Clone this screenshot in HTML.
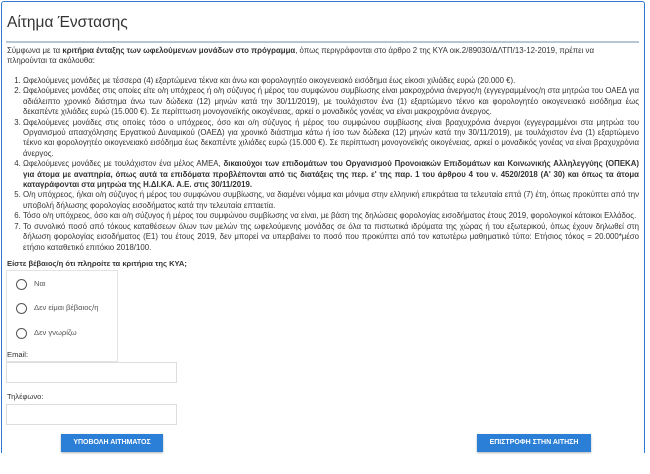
<!DOCTYPE html>
<html><head><meta charset="utf-8"><style>
body{margin:0;width:650px;height:474px;background:#fff;font-family:"Liberation Sans",sans-serif;color:#333;overflow:hidden}
.box{position:absolute;left:1px;top:1px;width:642px;height:451px;border:1.5px solid #2f78d0;border-bottom:none;border-radius:3px 3px 0 0}
h1{position:absolute;left:7px;top:14px;margin:0;font-size:15.5px;font-weight:normal;color:#333}
.hr{position:absolute;left:6px;top:41px;width:633px;height:2px;background:#b7c6d5}
.txt{position:absolute;left:7px;width:632px;font-size:7.85px;line-height:10.4px}
ol{margin:0;padding-left:16px}
li{text-align:justify}
.q{position:absolute;left:7px;top:259px;font-size:7.6px;font-weight:bold;color:#333}
.rb{position:absolute;left:6px;top:270px;width:110px;height:90px;border:1px solid #e3e3e3}
.r{position:absolute;left:16px;font-size:7.6px;color:#555;line-height:11px}
.r i{display:inline-block;width:9px;height:9px;border:1px solid #555;border-radius:50%;vertical-align:middle;margin-right:7px}
.lbl{position:absolute;left:7px;font-size:7.6px;color:#333}
.in{position:absolute;left:6px;width:169px;height:19px;border:1px solid #ddd}
.btn{position:absolute;top:434px;height:18px;background:#2b7fd6;color:#fff;font-size:7px;font-weight:bold;text-align:center;line-height:18px;box-shadow:0 1px 2px rgba(0,0,0,.3)}
</style></head><body>
<div class="box"></div>
<h1>Αίτημα Ένστασης</h1>
<div class="hr"></div>
<div class="txt" style="top:46px;width:600px">Σύμφωνα με τα <b>κριτήρια ένταξης των ωφελούμενων μονάδων στο πρόγραμμα</b>, όπως περιγράφονται στο άρθρο 2 της ΚΥΑ οικ.2/89030/ΔΛΤΠ/13-12-2019, πρέπει να πληρούνται τα ακόλουθα:</div>
<div class="txt" style="top:76px"><ol>
<li>Ωφελούμενες μονάδες με τέσσερα (4) εξαρτώμενα τέκνα και άνω και φορολογητέο οικογενειακό εισόδημα έως είκοσι χιλιάδες ευρώ (20.000 €).</li>
<li>Ωφελούμενες μονάδες στις οποίες είτε ο/η υπόχρεος ή ο/η σύζυγος ή μέρος του συμφώνου συμβίωσης είναι μακροχρόνια άνεργος/η (εγγεγραμμένος/η στα μητρώα του ΟΑΕΔ για αδιάλειπτο χρονικό διάστημα άνω των δώδεκα (12) μηνών κατά την 30/11/2019), με τουλάχιστον ένα (1) εξαρτώμενο τέκνο και φορολογητέο οικογενειακό εισόδημα έως δεκαπέντε χιλιάδες ευρώ (15.000 €). Σε περίπτωση μονογονεϊκής οικογένειας, αρκεί ο μοναδικός γονέας να είναι μακροχρόνια άνεργος.</li>
<li>Ωφελούμενες μονάδες στις οποίες τόσο ο υπόχρεος, όσο και ο/η σύζυγος ή μέρος του συμφώνου συμβίωσης είναι βραχυχρόνια άνεργοι (εγγεγραμμένοι στα μητρώα του Οργανισμού απασχόλησης Εργατικού Δυναμικού (ΟΑΕΔ) για χρονικό διάστημα κάτω ή ίσο των δώδεκα (12) μηνών κατά την 30/11/2019), με τουλάχιστον ένα (1) εξαρτώμενο τέκνο και φορολογητέο οικογενειακό εισόδημα έως δεκαπέντε χιλιάδες ευρώ (15.000 €). Σε περίπτωση μονογονεϊκής οικογένειας, αρκεί ο μοναδικός γονέας να είναι βραχυχρόνια άνεργος.</li>
<li>Ωφελούμενες μονάδες με τουλάχιστον ένα μέλος ΑΜΕΑ, <b>δικαιούχοι των επιδομάτων του Οργανισμού Προνοιακών Επιδομάτων και Κοινωνικής Αλληλεγγύης (ΟΠΕΚΑ) για άτομα με αναπηρία, όπως αυτά τα επιδόματα προβλέπονται από τις διατάξεις της περ. ε' της παρ. 1 του άρθρου 4 του ν. 4520/2018 (Α' 30) και όπως τα άτομα καταγράφονται στα μητρώα της Η.ΔΙ.ΚΑ. Α.Ε. στις 30/11/2019.</b></li>
<li>Ο/η υπόχρεος, ή/και ο/η σύζυγος ή μέρος του συμφώνου συμβίωσης, να διαμένει νόμιμα και μόνιμα στην ελληνική επικράτεια τα τελευταία επτά (7) έτη, όπως προκύπτει από την υποβολή δήλωσης φορολογίας εισοδήματος κατά την τελευταία επταετία.</li>
<li>Τόσο ο/η υπόχρεος, όσο και ο/η σύζυγος ή μέρος του συμφώνου συμβίωσης να είναι, με βάση της δηλώσεις φορολογίας εισοδήματος έτους 2019, φορολογικοί κάτοικοι Ελλάδος.</li>
<li>Το συνολικό ποσό από τόκους καταθέσεων όλων των μελών της ωφελούμενης μονάδας σε όλα τα πιστωτικά ιδρύματα της χώρας ή του εξωτερικού, όπως έχουν δηλωθεί στη δήλωση φορολογίας εισοδήματος (Ε1) του έτους 2019, δεν μπορεί να υπερβαίνει το ποσό που προκύπτει από τον κατωτέρω μαθηματικό τύπο: Ετήσιος τόκος = 20.000*μέσο ετήσιο καταθετικό επιτόκιο 2018/100.</li>
</ol></div>
<div class="q">Είστε βέβαιος/η ότι πληροίτε τα κριτήρια της ΚΥΑ;</div>
<div class="rb"></div>
<div class="r" style="top:278px"><i></i>Ναι</div>
<div class="r" style="top:302px"><i></i>Δεν είμαι βέβαιος/η</div>
<div class="r" style="top:327px"><i></i>Δεν γνωρίζω</div>
<div class="lbl" style="top:350px">Email:</div>
<div class="in" style="top:362px"></div>
<div class="lbl" style="top:392px">Τηλέφωνο:</div>
<div class="in" style="top:404px"></div>
<div class="btn" style="left:61px;width:102px">ΥΠΟΒΟΛΗ ΑΙΤΗΜΑΤΟΣ</div>
<div class="btn" style="left:477px;width:114px">ΕΠΙΣΤΡΟΦΗ ΣΤΗΝ ΑΙΤΗΣΗ</div>
</body></html>
